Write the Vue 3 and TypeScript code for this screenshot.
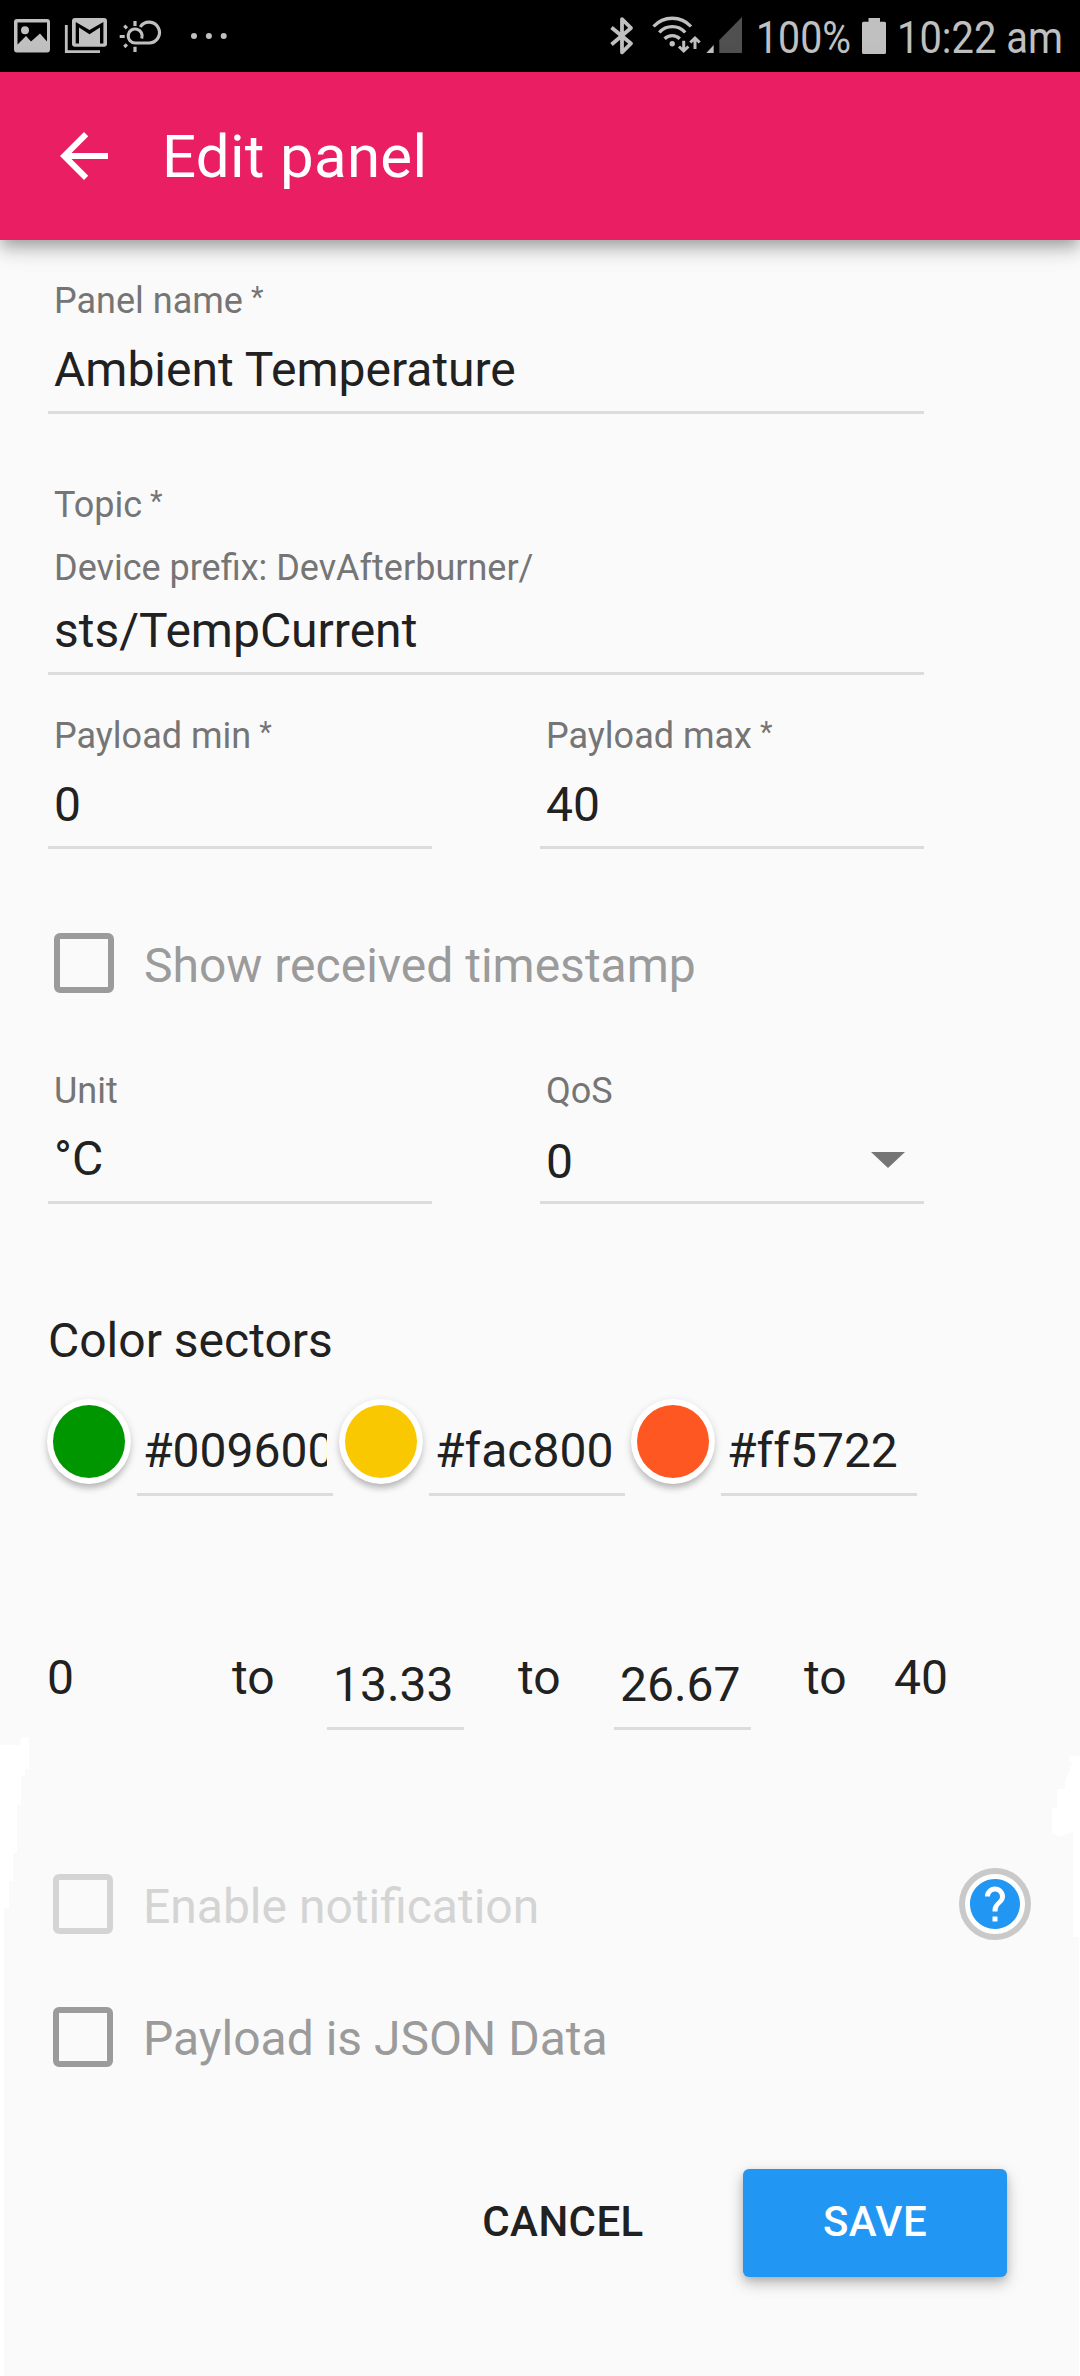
<script setup lang="ts">
interface Sector {
  color: string
}

const sectors: Sector[] = [
  { color: '#009600' },
  { color: '#fac800' },
  { color: '#ff5722' },
]

const limits: string[] = ['13.33', '26.67']
</script>

<template>
  <div class="screen">
    <div class="status-bar">
      <svg class="status-left" width="240" height="72" viewBox="0 0 240 72">
        <path fill="#c0c0c0" fill-rule="evenodd" d="M17 19h30a3 3 0 0 1 3 3v27.500a3 3 0 0 1-3 3H17a3 3 0 0 1-3-3V22a3 3 0 0 1 3-3zM17.500 22.500V44.500L26 36l5 5.500 9-8 7 8V22.500z" />
        <circle cx="25" cy="30.200" r="4" fill="#c0c0c0" />
        <path fill="#c0c0c0" fill-rule="evenodd" d="M75 18h29a3 3 0 0 1 3 3v22.800a3 3 0 0 1-3 3H75a3 3 0 0 1-3-3V21a3 3 0 0 1 3-3zM75.700 22V43.500h3.300V27.500l10.500 6.800 10.500-6.800V43.500h3.400V22L89.500 30z" />
        <path d="M66.300 25V51.700H100" fill="none" stroke="#c0c0c0" stroke-width="2.800" />
        <g fill="none" stroke="#c0c0c0" stroke-width="3.200">
          <path d="M140.300 27A10.400 10.400 0 1 1 148.700 43H135A7 7 0 1 1 141.700 38.500" />
          <path d="M135 21v5M135 46.700v5.300M119.700 36.500h5M124.300 25.700l2.600 2.600M124.300 47l2.600-2.600" />
        </g>
        <g fill="#c0c0c0">
          <circle cx="194" cy="36" r="3" />
          <circle cx="208.900" cy="36" r="3" />
          <circle cx="223.700" cy="36" r="3" />
        </g>
      </svg>
      <svg class="status-right" width="480" height="72" viewBox="600 0 480 72">
        <path d="M611.500 27.500L631 43.500 622 52.300V19.200L631 28 611.500 44.500" fill="none" stroke="#c0c0c0" stroke-width="3.800" stroke-linejoin="round" />
        <g fill="none" stroke="#c0c0c0" stroke-width="3.300">
          <path d="M653.500 26.500A25.400 25.400 0 0 1 691 26.500" />
          <path d="M659.300 32.500A17.200 17.200 0 0 1 685.200 32.500" />
          <path d="M664.600 38.700A11 11 0 0 1 679.800 38.700" />
          <path d="M683.700 40.700V51M679 46.500l4.700 4.500 4.700-4.500M695 49V38.500M690.300 42.500l4.700-4.500 4.700 4.500" stroke-width="3" />
        </g>
        <circle cx="672.200" cy="43.700" r="2.700" fill="#c0c0c0" />
        <path d="M706.300 53L713.700 45V53z" fill="#c0c0c0" />
        <path d="M719.300 53V40L742 17V53z" fill="#505050" />
        <text x="756" y="53" textLength="95" lengthAdjust="spacingAndGlyphs" class="status-text">100%</text>
        <path d="M868.500 18h11.500v3.700h4.500a1.500 1.500 0 0 1 1.500 1.500V52.500a1.500 1.500 0 0 1-1.500 1.500H863.500a1.500 1.500 0 0 1-1.500-1.500V23.200a1.500 1.500 0 0 1 1.500-1.500h5z" fill="#c0c0c0" />
        <text x="897" y="53" textLength="166" lengthAdjust="spacingAndGlyphs" class="status-text">10:22 am</text>
      </svg>
    </div>

    <header class="toolbar">
      <svg class="back" width="72" height="72" viewBox="0 0 24 24">
        <path fill="#fff" d="M20 11H7.830l5.590-5.590L12 4l-8 8 8 8 1.410-1.410L7.830 13H20v-2z" />
      </svg>
      <h1 class="title">Edit panel</h1>
    </header>

    <main class="form">
      <div class="field name">
        <label class="label">Panel name<span class="star">*</span></label>
        <div class="value">Ambient Temperature</div>
      </div>

      <div class="field topic">
        <label class="label">Topic<span class="star">*</span></label>
        <div class="label prefix">Device prefix: DevAfterburner/</div>
        <div class="value">sts/TempCurrent</div>
      </div>

      <div class="pair payload">
        <div class="field">
          <label class="label">Payload min<span class="star">*</span></label>
          <div class="value">0</div>
        </div>
        <div class="field">
          <label class="label">Payload max<span class="star">*</span></label>
          <div class="value">40</div>
        </div>
      </div>

      <div class="check timestamp">
        <span class="box"></span>
        <span class="check-label">Show received timestamp</span>
      </div>

      <div class="pair unit">
        <div class="field">
          <label class="label">Unit</label>
          <div class="value">°C</div>
        </div>
        <div class="field select">
          <label class="label">QoS</label>
          <div class="value">
            <span>0</span>
            <svg class="caret" width="34" height="16" viewBox="0 0 34 16"><path d="M0 0h34L17 16z" fill="#757575" /></svg>
          </div>
        </div>
      </div>

      <h2 class="heading">Color sectors</h2>
      <div class="sectors">
        <div v-for="s in sectors" :key="s.color" class="sector">
          <span class="swatch" :style="{ background: s.color }"></span>
          <div class="input"><div class="clip">{{ s.color }}</div></div>
        </div>
      </div>

      <div class="range">
        <span class="start">0</span>
        <template v-for="l in limits" :key="l">
          <span class="to">to</span>
          <div class="input"><div class="clip">{{ l }}</div></div>
        </template>
        <span class="to last">to</span>
        <span>40</span>
      </div>

      <div class="check notify">
        <span class="box"></span>
        <span class="check-label">Enable notification</span>
        <span class="help">
          <svg width="60" height="60" viewBox="0 0 24 24">
            <path fill="#2196f3" d="M12 2C6.480 2 2 6.480 2 12s4.480 10 10 10 10-4.480 10-10S17.520 2 12 2zm1 17h-2v-2h2v2zm2.070-7.750l-.9.920C13.450 12.900 13 13.500 13 15h-2v-.5c0-1.100.45-2.100 1.170-2.830l1.240-1.260c.37-.36.59-.86.59-1.410 0-1.100-.9-2-2-2s-2 .9-2 2H8c0-2.210 1.790-4 4-4s4 1.790 4 4c0 .88-.36 1.680-.93 2.250z" />
          </svg>
        </span>
      </div>

      <div class="check json">
        <span class="box"></span>
        <span class="check-label">Payload is JSON Data</span>
      </div>

      <div class="actions">
        <button class="btn cancel">CANCEL</button>
        <button class="btn save">SAVE</button>
      </div>
    </main>

    <svg class="edges" width="1080" height="640" viewBox="0 1736 1080 640">
      <path fill="#fff" d="M0 1745H21V1737H29V1769H25V1776H21V1805H17V1853H13V1881H9V1908H4V2376H0z" />
      <path fill="#fff" d="M1080 1756H1069V1762H1072L1069 1773 1065 1781V1789H1057V1808H1052V1833L1059 1837 1073 1832V1937H1079V2376H1080z" />
    </svg>
  </div>
</template>

<style>
body {
  margin: 0;
  background: #fafafa;
}
</style>

<style scoped>
.screen {
  position: relative;
  width: 1080px;
  height: 2376px;
  overflow: hidden;
  background: #fafafa;
  font-family: Roboto, 'Liberation Sans', sans-serif;
  font-size: 48px;
  line-height: 56px;
  color: #212121;
}

.status-bar {
  display: flex;
  justify-content: space-between;
  height: 72px;
  background: #000;
}

.status-right {
  overflow: visible;
}

.status-text {
  font-size: 45px;
  fill: #c0c0c0;
}

.toolbar {
  position: relative;
  display: flex;
  align-items: center;
  height: 168px;
  padding-left: 48px;
  background: #e91e63;
  box-shadow:
    0 6px 12px -3px rgba(0, 0, 0, 0.2),
    0 12px 15px 0 rgba(0, 0, 0, 0.14),
    0 3px 30px 0 rgba(0, 0, 0, 0.12);
}

.title {
  margin: 1px 0 0 42px;
  font-size: 60px;
  font-weight: 400;
  line-height: 70px;
  letter-spacing: 0.3px;
  color: #fff;
}

.form {
  padding: 40px 0 0 48px;
}

.field {
  width: 870px;
  padding: 0 0 13px 6px;
  border-bottom: 3px solid #dcdcdc;
}

.label {
  display: flex;
  height: 42px;
  font-size: 36px;
  line-height: 42px;
  color: #757575;
}

.star {
  margin-left: 8px;
  font-size: 29px;
  line-height: 34px;
}

.value {
  white-space: nowrap;
}

.name .value {
  margin-top: 20px;
}

.topic {
  margin-top: 70px;
}

.topic .prefix {
  margin-top: 21px;
}

.topic .value {
  margin-top: 14px;
}

.pair {
  display: flex;
  gap: 108px;
}

.pair .field {
  width: 378px;
}

.payload {
  margin-top: 40px;
}

.payload .field {
  padding-bottom: 13px;
}

.payload .value {
  margin-top: 20px;
}

.unit {
  margin-top: 77px;
}

.unit .field {
  padding-bottom: 14px;
}

.unit .value {
  margin-top: 19px;
}

.unit .select {
  padding-bottom: 11px;
}

.select .value {
  display: flex;
  justify-content: space-between;
  margin-top: 22px;
}

.caret {
  margin: 18px 19px 0 0;
}

.check {
  display: flex;
  align-items: flex-start;
  height: 60px;
}

.box {
  box-sizing: border-box;
  width: 60px;
  height: 60px;
  margin-left: 6px;
  border: 6px solid #9b9b9b;
  border-radius: 6px;
}

.check-label {
  margin-left: 30px;
  line-height: 66px;
  color: #9b9b9b;
  white-space: nowrap;
}

.timestamp {
  margin-top: 84px;
}

.heading {
  margin: 109px 0 0;
  font-size: 48px;
  font-weight: 400;
}

.sectors {
  display: flex;
  gap: 6px;
  margin: 30px 0 0 -1px;
}

.sector {
  display: flex;
  gap: 6px;
  height: 97px;
}

.swatch {
  box-sizing: border-box;
  width: 84px;
  height: 85px;
  border: 6px solid #fff;
  border-radius: 50%;
  box-shadow:
    0 3px 9px rgba(0, 0, 0, 0.16),
    0 6px 6px -2px rgba(0, 0, 0, 0.16);
}

.input {
  box-sizing: border-box;
  padding: 0 6px 14px;
  border-bottom: 3px solid #dcdcdc;
}

.clip {
  overflow: hidden;
  white-space: nowrap;
}

.sector .input {
  width: 196px;
  height: 73px;
  margin-top: 24px;
}

.range {
  display: grid;
  grid-template-columns: 184px 95px 137px 54px 96px 137px 53px 90px 60px;
  height: 80px;
  margin-top: 154px;
}

.range .start {
  margin-left: -1px;
}

.range .to {
  grid-column: 5;
}

.range .to:nth-child(2) {
  grid-column: 2;
}

.range .to.last {
  grid-column: 8;
}

.range .input {
  height: 73px;
  margin-top: 7px;
}

.notify {
  margin-top: 144px;
}

.notify .box,
.json .box {
  margin-left: 5px;
}

.notify .box {
  border-color: #d4d4d4;
}

.notify .check-label {
  color: #d4d4d4;
}

.help {
  box-sizing: border-box;
  width: 72px;
  height: 72px;
  margin: -6px 49px 0 auto;
  border: 6px solid #c9c9c9;
  border-radius: 50%;
  background: #fff;
}

.help svg {
  display: block;
}

.json {
  margin-top: 73px;
}

.json .check-label {
  line-height: 64px;
}

.actions {
  display: flex;
  justify-content: flex-end;
  margin: 102px 73px 0 0;
}

.btn {
  height: 108px;
  padding: 0 0 3px;
  border: 0;
  border-radius: 6px;
  background: none;
  font-family: inherit;
  font-size: 42px;
  font-weight: 500;
  letter-spacing: 0.42px;
  color: #212121;
}

.cancel {
  width: 264px;
  margin-right: 48px;
}

.save {
  width: 264px;
  background: #2196f3;
  color: #fff;
  box-shadow:
    0 6px 15px rgba(0, 0, 0, 0.26),
    0 3px 6px rgba(0, 0, 0, 0.1);
}

.edges {
  position: absolute;
  left: 0;
  bottom: 0;
  pointer-events: none;
}
</style>
